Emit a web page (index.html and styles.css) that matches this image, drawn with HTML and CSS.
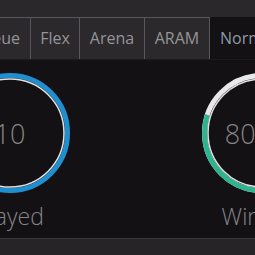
FILE: index.html
```html
<!DOCTYPE html>
<html lang="en">
<head>
  <meta charset="UTF-8">
  <meta name="viewport" content="width=device-width, initial-scale=1.0">
  <title>Stats</title>
  <link rel="stylesheet" href="styles.css">
</head>
<body>
  <div class="topbar"></div>
  <nav class="tabs">
    <div class="tab tab-wide"><span>Solo Queue</span></div>
    <div class="tab tab-narrow">Flex</div>
    <div class="tab">Arena</div>
    <div class="tab">ARAM</div>
    <div class="tab active">Normal</div>
  </nav>
  <main class="stats">
    <div class="stat">
      <div class="ring">
        <svg viewBox="0 0 120 120" width="120" height="120">
          <circle class="track" cx="60" cy="60" r="57.5" stroke="#1f8fcf"/>
          <circle class="inner" cx="60" cy="60" r="54"/>
        </svg>
        <span class="value">10</span>
      </div>
      <div class="label">Played</div>
    </div>
    <div class="stat">
      <div class="ring">
        <svg viewBox="0 0 120 120" width="120" height="120">
          <circle class="track" cx="60" cy="60" r="57.5" stroke="#e8e8e8"/>
          <circle class="track" cx="60" cy="60" r="57.5" stroke="#2db38e"
                  stroke-dasharray="289 362" transform="rotate(-90 60 60)"/>
          <circle class="inner" cx="60" cy="60" r="54"/>
        </svg>
        <span class="value">80.0%</span>
      </div>
      <div class="label">Winrate</div>
    </div>
  </main>
  <footer class="bottombar"></footer>
</body>
</html>
```

FILE: styles.css
```css
:root {
  --bar: #2a282b;
  --tab-bg: #2b292c;
  --tab-line: #58565a;
  --content: #131114;
  --text: #858488;
}
* {
  box-sizing: border-box;
  margin: 0;
  padding: 0;
}
html, body {
  overflow: hidden;
}
body {
  font-family: 'Open Sans', 'Segoe UI', sans-serif;
  background: var(--content);
  color: var(--text);
  width: 255px;
  height: 255px;
}
.topbar {
  height: 17px;
  background: var(--bar);
}
.tabs {
  display: flex;
  height: 43px;
  margin-left: -60px;
  width: 400px;
  background: var(--tab-bg);
  border-top: 1px solid var(--tab-line);
  border-bottom: 1px solid #1c1a1d;
}
.tab {
  flex: 0 0 65px;
  min-width: 0;
  text-align: center;
  line-height: 41px;
  font-size: 16px;
  color: #959497;
  border-right: 1px solid var(--tab-line);
  white-space: nowrap;
}
.tab-wide {
  flex-basis: 91px;
  display: flex;
  justify-content: flex-end;
  padding-right: 10px;
}
.tab-wide span {
  flex-shrink: 0;
}
.tab-narrow {
  flex-basis: 49px;
}
.tab.active {
  flex: 1;
  text-align: left;
  padding: 1px 0 0 10px;
  margin-top: -1px;
  background: var(--content);
  color: #8e9aa8;
  border-right: none;
}
.stats {
  display: flex;
  gap: 112px;
  margin-left: -60px;
  height: 178px;
  padding-top: 13px;
}
.stat {
  width: 140px;
  flex-shrink: 0;
  display: flex;
  flex-direction: column;
  align-items: center;
}
.ring {
  position: relative;
  width: 120px;
  height: 120px;
}
.ring svg {
  display: block;
}
.track {
  fill: none;
  stroke-width: 5;
}
.inner {
  fill: none;
  stroke: #e2e2e2;
  stroke-width: 1.5;
}
.value {
  position: absolute;
  inset: 0;
  display: flex;
  justify-content: center;
  align-items: center;
  font-size: 27px;
  font-weight: 300;
}
.label {
  margin-top: 8px;
  font-size: 23px;
  font-weight: 300;
  line-height: 30px;
}
.bottombar {
  height: 17px;
  background: #262427;
  border-top: 1px solid #39373a;
}
```
